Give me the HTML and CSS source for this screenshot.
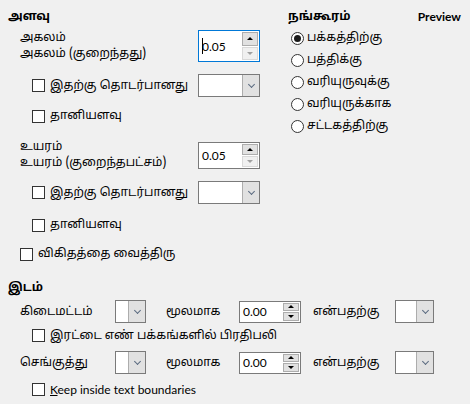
FILE: index.html
```html
<!DOCTYPE html>
<html>
<head>
<meta charset="utf-8">
<link rel="stylesheet" href="styles.css">
</head>
<body>
<div class="dialog">
  <div class="top">
    <div class="left">
      <div class="heading">அளவு</div>
      <div class="size-row tall">
        <div class="two-lines"><div>அகலம்</div><div>அகலம் (குறைந்தது)</div></div>
        <div class="spin focused tallspin">
          <span class="caret"></span><span class="val">0.05</span>
          <div class="spinbtns"><div class="sb up active"><span class="tri-up"></span></div><div class="sb down"><span class="tri-down"></span></div></div>
        </div>
      </div>
      <div class="check-row r-rel1">
        <label class="chk"><span class="box"></span>இதற்கு தொடர்பானது</label>
        <div class="combo w62"><div class="field"></div><div class="drop"><span class="chev"></span></div></div>
      </div>
      <div class="check-row r-auto1">
        <label class="chk"><span class="box"></span>தானியளவு</label>
      </div>
      <div class="size-row r-height">
        <div class="two-lines"><div>உயரம்</div><div>உயரம் (குறைந்தபட்சம்)</div></div>
        <div class="spin hspin">
          <span class="val">0.05</span>
          <div class="spinbtns"><div class="sb up active"><span class="tri-up"></span></div><div class="sb down"><span class="tri-down"></span></div></div>
        </div>
      </div>
      <div class="check-row r-rel2">
        <label class="chk"><span class="box"></span>இதற்கு தொடர்பானது</label>
        <div class="combo w62"><div class="field"></div><div class="drop"><span class="chev"></span></div></div>
      </div>
      <div class="check-row r-auto2">
        <label class="chk"><span class="box"></span>தானியளவு</label>
      </div>
      <div class="check-row r-ratio">
        <label class="chk"><span class="box"></span>விகிதத்தை வைத்திரு</label>
      </div>
    </div>
    <div class="right">
      <div class="right-head"><span class="anchor">நங்கூரம்</span><span class="preview">Preview</span></div>
      <div class="radios">
        <label class="rad"><span class="circle on"></span>பக்கத்திற்கு</label>
        <label class="rad"><span class="circle"></span>பத்திக்கு</label>
        <label class="rad"><span class="circle"></span>வரியுருவுக்கு</label>
        <label class="rad"><span class="circle"></span>வரியுருக்காக</label>
        <label class="rad"><span class="circle"></span>சட்டகத்திற்கு</label>
      </div>
    </div>
  </div>
  <div class="position">
    <div class="heading">இடம்</div>
    <div class="pos-row r-pos1">
      <span class="plabel">கிடைமட்டம்</span>
      <div class="combo w31"><div class="field"></div><div class="drop"><span class="chev"></span></div></div>
      <span class="plabel2">மூலமாக</span>
      <div class="spin pspin"><span class="val">0.00</span>
        <div class="spinbtns"><div class="sb up active"><span class="tri-up"></span></div><div class="sb down active"><span class="tri-down dark"></span></div></div>
      </div>
      <span class="plabel3">என்பதற்கு</span>
      <div class="combo w39"><div class="field"></div><div class="drop"><span class="chev"></span></div></div>
    </div>
    <div class="check-row r-mirror">
      <label class="chk"><span class="box"></span>இரட்டை எண் பக்கங்களில் பிரதிபலி</label>
    </div>
    <div class="pos-row r-pos2">
      <span class="plabel">செங்குத்து</span>
      <div class="combo w31"><div class="field"></div><div class="drop"><span class="chev"></span></div></div>
      <span class="plabel2">மூலமாக</span>
      <div class="spin pspin"><span class="val">0.00</span>
        <div class="spinbtns"><div class="sb up active"><span class="tri-up"></span></div><div class="sb down active"><span class="tri-down dark"></span></div></div>
      </div>
      <span class="plabel3">என்பதற்கு</span>
      <div class="combo w39"><div class="field"></div><div class="drop"><span class="chev"></span></div></div>
    </div>
    <div class="check-row r-keep">
      <label class="chk latin"><span class="box"></span><span><u>K</u>eep inside text boundaries</span></label>
    </div>
  </div>
</div>
</body>
</html>
```
FILE: styles.css
```css
html, body {
  margin: 0;
  padding: 0;
  background: #f0f0f0;
}
body {
  font-family: "Noto Sans Tamil", "Lohit Tamil", "Noto Sans", "Open Sans", sans-serif;
  font-size: 12px;
  color: #000;
  width: 470px;
  height: 404px;
  overflow: hidden;
}
.dialog {
  padding: 8px 8px 0 8px;
}
.top {
  display: grid;
  grid-template-columns: 280px 1fr;
}
.heading {
  height: 18px;
  line-height: 18px;
  font-weight: bold;
}
.size-row {
  display: flex;
  align-items: center;
  padding-left: 12px;
}
.size-row.tall {
  margin-top: 4px;
  height: 32px;
}
.two-lines {
  width: 178px;
  line-height: 16px;
}
.check-row {
  display: flex;
  align-items: center;
  padding-left: 24px;
  height: 22px;
}
.chk {
  display: flex;
  align-items: center;
  width: 166px;
  white-space: nowrap;
}
.box {
  width: 11px;
  height: 11px;
  border: 1px solid #333;
  background: #fff;
  margin-right: 5px;
  flex: none;
}
.r-rel1 { margin-top: 12px; height: 23px; }
.r-auto1 { margin-top: 8px; }
.r-height { margin-top: 13px; height: 30px; }
.r-rel2 { margin-top: 11px; height: 23px; }
.r-auto2 { margin-top: 10px; }
.r-ratio { margin-top: 7px; padding-left: 12px; }
.r-ratio .chk { width: auto; }

.spin {
  position: relative;
  box-sizing: border-box;
  width: 62px;
  background: #fff;
  border: 1px solid #7a7a7a;
  display: flex;
  align-items: center;
  font-family: "Lato", "Open Sans", sans-serif;
}
.spin.focused { border-color: #0078d7; }
.tallspin { height: 32px; }
.hspin { height: 27px; }
.pspin { height: 22px; }
.val { padding-left: 3px; }
.caret {
  position: absolute;
  left: 3px;
  top: 7px;
  width: 1px;
  height: 16px;
  background: #000;
}
.spinbtns {
  position: absolute;
  right: 1px;
  top: 1px;
  bottom: 1px;
  width: 16px;
  display: flex;
  flex-direction: column;
}
.sb {
  flex: 1;
  box-sizing: border-box;
  border: 1px solid #d9d9d9;
  background: #f0f0f0;
  display: flex;
  align-items: center;
  justify-content: center;
}
.sb.active {
  border-color: #adadad;
  background: #e1e1e1;
}
.sb.down { margin-top: 1px; }
.tri-up {
  width: 0; height: 0;
  border-left: 3px solid transparent;
  border-right: 3px solid transparent;
  border-bottom: 3px solid #000;
}
.tri-down {
  width: 0; height: 0;
  border-left: 3px solid transparent;
  border-right: 3px solid transparent;
  border-top: 3px solid #a0a0a0;
}
.tri-down.dark { border-top-color: #000; }

.combo {
  box-sizing: border-box;
  height: 23px;
  border: 1px solid #7a7a7a;
  background: #fff;
  display: flex;
}
.combo .field { flex: 1; }
.combo .drop {
  width: 16px;
  background: #e1e1e1;
  border-left: 1px solid #adadad;
  display: flex;
  align-items: center;
  justify-content: center;
}
.chev {
  width: 4px;
  height: 4px;
  border-right: 1px solid #5a6a80;
  border-bottom: 1px solid #5a6a80;
  transform: rotate(45deg);
  margin-top: -3px;
}
.w62 { width: 62px; }
.w31 { width: 31px; }
.w39 { width: 39px; }

.right-head {
  display: flex;
  justify-content: space-between;
  height: 18px;
  line-height: 18px;
}
.anchor { font-weight: bold; }
.preview {
  font-family: "Lato", "Open Sans", sans-serif;
  font-weight: bold;
  margin-right: 1px;
}
.radios {
  margin-top: 1px;
  padding-left: 3px;
}
.rad {
  display: flex;
  align-items: center;
  height: 22px;
}
.circle {
  box-sizing: border-box;
  width: 13px;
  height: 13px;
  border: 1px solid #333;
  border-radius: 50%;
  background: #fff;
  margin-right: 3px;
  display: flex;
  align-items: center;
  justify-content: center;
}
.circle.on::after {
  content: "";
  width: 7px;
  height: 7px;
  border-radius: 50%;
  background: #1a1a1a;
}

.position { margin-top: 14px; }
.pos-row {
  display: flex;
  align-items: center;
  padding-left: 12px;
  height: 23px;
}
.r-pos1 { margin-top: 3px; }
.r-pos2 { margin-top: 3px; }
.plabel { width: 95px; }
.plabel2 { width: 73px; margin-left: 20px; }
.plabel3 { width: 82px; margin-left: 12px; }
.r-mirror { height: 25px; }
.r-mirror .chk, .r-keep .chk { width: auto; }
.r-keep { margin-top: 4px; }
.latin { font-family: "Lato", "Open Sans", sans-serif; }
u { text-decoration: underline; }
```
